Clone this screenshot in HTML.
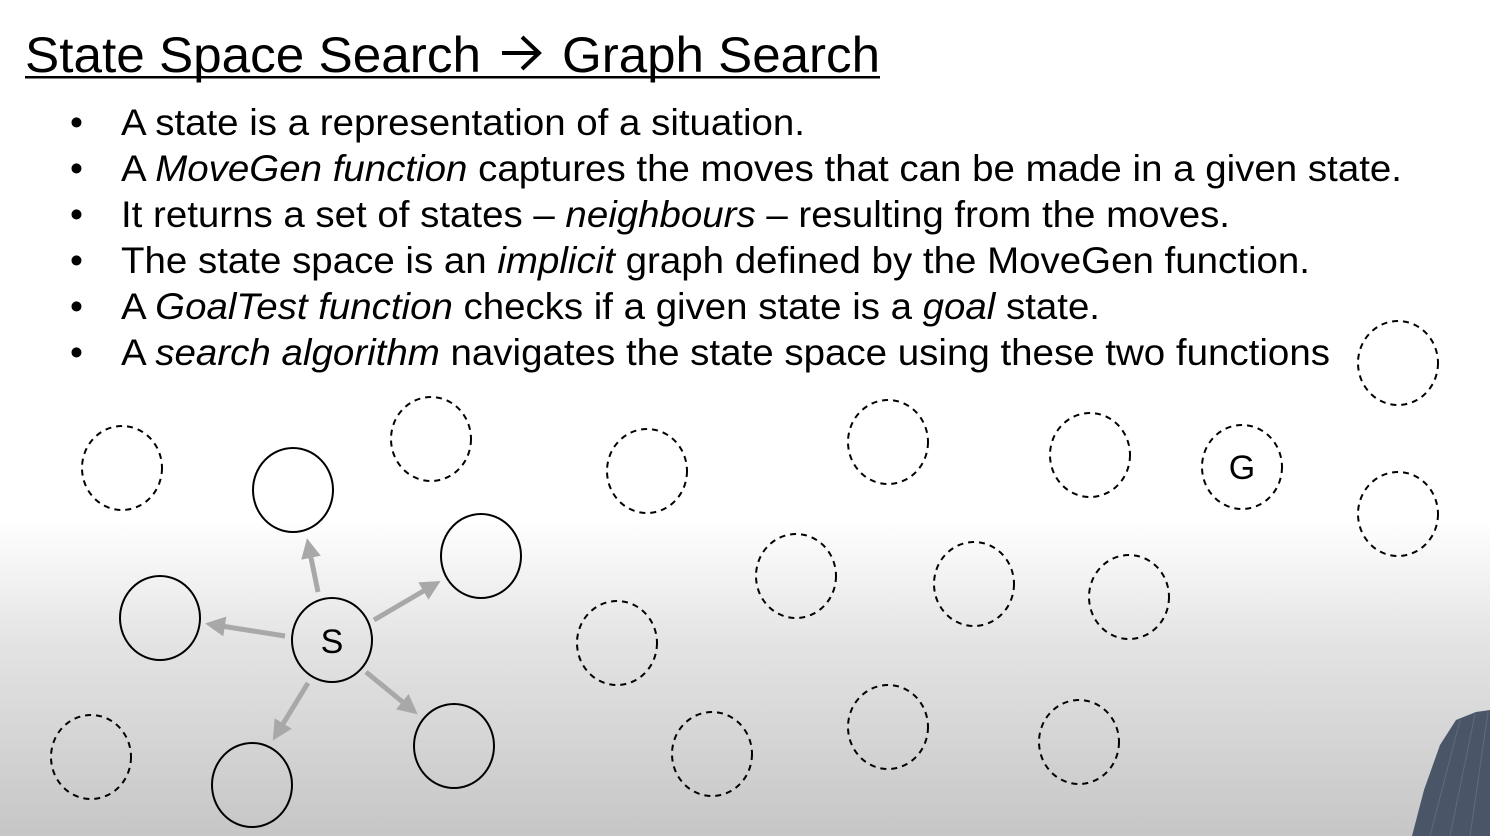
<!DOCTYPE html>
<html><head><meta charset="utf-8"><style>
html,body{margin:0;padding:0}
body{width:1490px;height:836px;overflow:hidden;background:linear-gradient(to bottom,#fff 0,#fff 520px,#e4e4e4 640px,#c6c6c6 836px);}
svg{display:block}
text{font-family:"Liberation Sans",Arial,sans-serif;fill:#000}
</style></head><body>
<svg width="1490" height="836" viewBox="0 0 1490 836">
<text x="25" y="72" font-size="50" textLength="456" lengthAdjust="spacingAndGlyphs">State Space Search</text>
<path d="M502,53 L538,53 M522,37 L539,53 L522,69" fill="none" stroke="#000" stroke-width="4"/>
<text x="562" y="72" font-size="50" textLength="318" lengthAdjust="spacingAndGlyphs">Graph Search</text>
<rect x="25" y="76" width="855" height="2.5" fill="#000"/>
<g font-size="37">
<text x="70" y="135">•</text><text x="70" y="181">•</text><text x="70" y="227">•</text><text x="70" y="273">•</text><text x="70" y="319">•</text><text x="70" y="365">•</text>
<text x="121" y="135" textLength="684" lengthAdjust="spacingAndGlyphs">A state is a representation of a situation.</text>
<text x="121" y="181" textLength="1281" lengthAdjust="spacingAndGlyphs">A <tspan font-style="italic">MoveGen function</tspan> captures the moves that can be made in a given state.</text>
<text x="121" y="227" textLength="1109" lengthAdjust="spacingAndGlyphs">It returns a set of states – <tspan font-style="italic">neighbours</tspan> – resulting from the moves.</text>
<text x="121" y="273" textLength="1189" lengthAdjust="spacingAndGlyphs">The state space is an <tspan font-style="italic">implicit</tspan> graph defined by the MoveGen function.</text>
<text x="121" y="319" textLength="979" lengthAdjust="spacingAndGlyphs">A <tspan font-style="italic">GoalTest function</tspan> checks if a given state is a <tspan font-style="italic">goal</tspan> state.</text>
<text x="121" y="365" textLength="1209" lengthAdjust="spacingAndGlyphs">A <tspan font-style="italic">search algorithm</tspan> navigates the state space using these two functions</text>
</g>
<g fill="none" stroke="#000" stroke-width="2" stroke-dasharray="6,5">
<ellipse cx="122" cy="468" rx="40" ry="42"/><ellipse cx="431" cy="439" rx="40" ry="42"/>
<ellipse cx="647" cy="471" rx="40" ry="42"/><ellipse cx="888" cy="442" rx="40" ry="42"/>
<ellipse cx="1090" cy="455" rx="40" ry="42"/><ellipse cx="1242" cy="467" rx="40" ry="42"/>
<ellipse cx="1398" cy="363" rx="40" ry="42"/><ellipse cx="1398" cy="514" rx="40" ry="42"/>
<ellipse cx="796" cy="576" rx="40" ry="42"/><ellipse cx="974" cy="584" rx="40" ry="42"/>
<ellipse cx="1129" cy="597" rx="40" ry="42"/><ellipse cx="617" cy="643" rx="40" ry="42"/>
<ellipse cx="91" cy="757" rx="40" ry="42"/><ellipse cx="712" cy="754" rx="40" ry="42"/>
<ellipse cx="888" cy="727" rx="40" ry="42"/><ellipse cx="1079" cy="742" rx="40" ry="42"/>
</g>
<g fill="none" stroke="#000" stroke-width="2">
<ellipse cx="293" cy="490" rx="40" ry="42"/><ellipse cx="481" cy="556" rx="40" ry="42"/>
<ellipse cx="160" cy="618" rx="40" ry="42"/><ellipse cx="332" cy="640" rx="40" ry="42"/>
<ellipse cx="454" cy="746" rx="40" ry="42"/><ellipse cx="252" cy="785" rx="40" ry="42"/>
</g>
<text x="1242" y="479" font-size="34" text-anchor="middle">G</text>
<text x="332" y="653" font-size="34" text-anchor="middle">S</text>
<defs><marker id="a" markerWidth="4" markerHeight="4" refX="2" refY="2" orient="auto" markerUnits="strokeWidth"><path d="M0,0 L4,2 L0,4z" fill="#a8a8a8"/></marker></defs>
<g stroke="#a8a8a8" stroke-width="5" marker-end="url(#a)">
<line x1="318" y1="592" x2="309" y2="548"/>
<line x1="374" y1="620" x2="432" y2="586"/>
<line x1="285" y1="636" x2="215" y2="625"/>
<line x1="308" y1="683" x2="278" y2="732"/>
<line x1="366" y1="672" x2="410" y2="708"/>
</g>
<path d="M1412,836 L1424,790 L1440,745 L1456,720 L1476,712 L1490,710 L1490,836Z" fill="#4a5668"/>
<g stroke="#6d7a8c" stroke-width="1" opacity="0.6">
<line x1="1430" y1="836" x2="1460" y2="720"/><line x1="1450" y1="836" x2="1475" y2="714"/><line x1="1470" y1="836" x2="1488" y2="712"/>
</g>
</svg>
</body></html>
